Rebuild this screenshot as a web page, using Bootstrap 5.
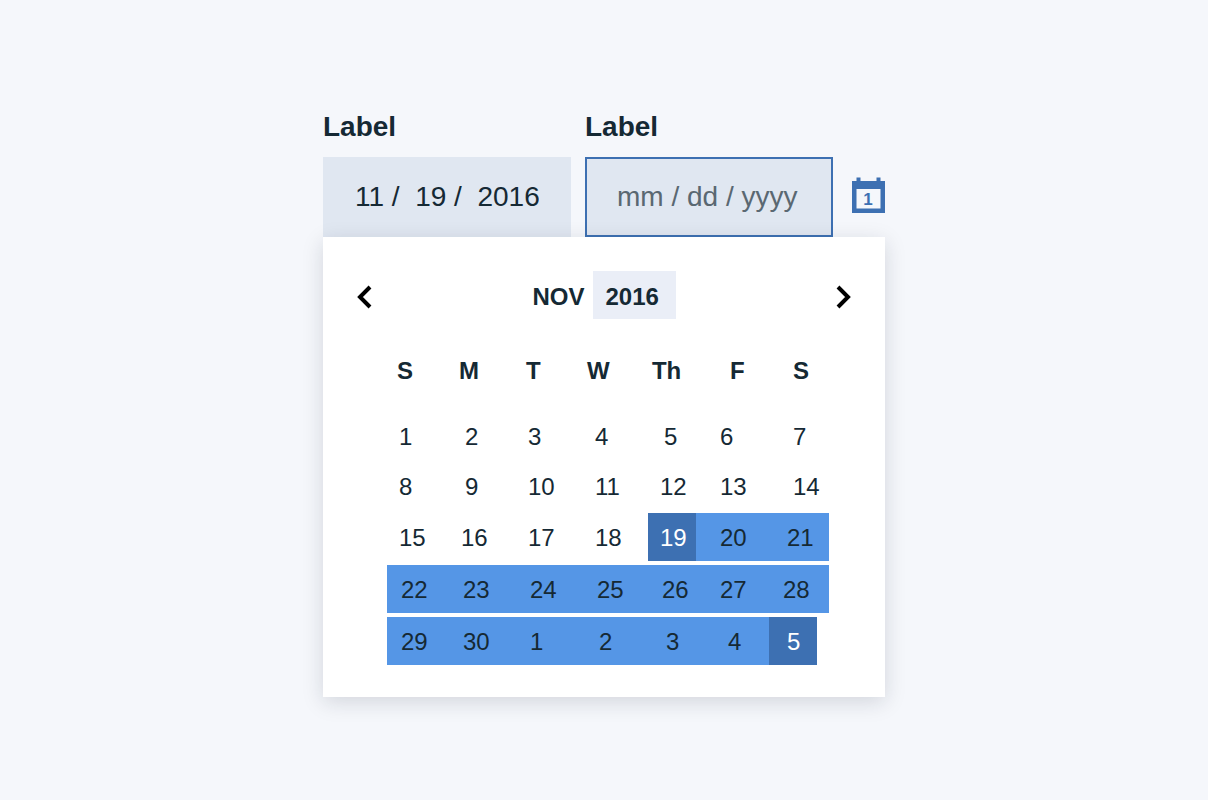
<!DOCTYPE html>
<html lang="en">
<head>
<meta charset="utf-8">
<meta name="viewport" content="width=device-width, initial-scale=1">
<title>Date range picker</title>
<link href="https://cdn.jsdelivr.net/npm/bootstrap@5.3.0/dist/css/bootstrap.min.css" rel="stylesheet">
<style>
  :root { --ink: #152934; --blue: #3d70b2; --sky: #5596e6; --field: #e0e7f1; }
  body { background: #f5f7fb; color: var(--ink); font-family: "Liberation Sans", Arial, sans-serif; }
  .picker { max-width: 562px; }
  .fields { gap: 14px; }
  .fields .form-label { font-size: 28px; line-height: 48px; font-weight: 700; margin-bottom: 6px; }
  .date-box { height: 80px; padding: 0 30px; border: 2px solid var(--field); border-radius: 0; background: var(--field); color: var(--ink); font-size: 28px; }
  .date-box:focus, .date-box.is-active { background: var(--field); border-color: var(--blue); box-shadow: none; }
  .date-box::placeholder { color: #5a6872; }
  .cal-toggle { width: 33px; margin: 0 0 24px 5px; }
  .panel { border-radius: 0; padding: 34px 0 28px; box-shadow: 0 5px 20px rgba(20, 25, 50, .15); }
  .month-bar { padding: 0 34px; margin-bottom: 22px; font-size: 24px; }
  .month-bar button, .cal-toggle { border: 0; background: none; padding: 0; color: inherit; line-height: 1; font-weight: 700; }
  .month-bar .arrow { color: #000; display: flex; padding-top: 4px; }
  .month-bar .year { background: #eaeef7; height: 48px; width: 83px; padding: 4px 0 0 13px; text-align: left; }
  .month-bar .month { padding-top: 4px; }
  .days-wrap { padding: 0 56px 0 64px; }
  .days { width: 100%; table-layout: fixed; border-collapse: separate; border-spacing: 0 4px; font-size: 24px; line-height: 46px; }
  .days th, .days td { padding: 0; }
  .days th { height: 64px; vertical-align: top; line-height: 52px; padding-left: 10px; }
  .days th.near { padding-left: 4px; }
  .days th.wide { padding-left: 24px; }
  .days th.far { padding-left: 34px; }
  .days button { display: block; width: 100%; height: 46px; border: 0; padding: 2px 0 0 12px; background: none; color: inherit; text-align: left; line-height: 44px; }
  .days .tall button { height: 48px; line-height: 46px; }
  .days .in-range button { padding-left: 14px; }
  .days td.solo button { padding-left: 16px; }
  .days td.wide button { padding-left: 24px; }
  .days td.end button { padding-left: 18px; }
  .days td.far button { padding-left: 32px; }
  .days .in-range { background: var(--sky); }
  .days .picked { background: var(--blue); color: #fff; }
</style>
</head>
<body class="min-vh-100 d-flex align-items-center justify-content-center">
<main class="picker w-100">
  <div class="fields d-flex align-items-end">
    <div class="flex-fill w-50">
      <label class="form-label d-block" for="from">Label</label>
      <input class="form-control date-box" id="from" type="text" value="11 /  19 /  2016">
    </div>
    <div class="flex-fill w-50">
      <label class="form-label d-block" for="to">Label</label>
      <input class="form-control date-box is-active" id="to" type="text" placeholder="mm / dd / yyyy">
    </div>
    <button class="cal-toggle flex-shrink-0" type="button" aria-label="Open calendar">
      <svg class="d-block" width="33" height="36" viewBox="0 0 33 36">
        <path fill="#3d70b2" fill-rule="evenodd" d="M4.500 .5h4V4h16V.5h4V4H33v32H0V4h4.500zM4.500 12v19.500h24V12z"/>
        <text x="16" y="28" text-anchor="middle" font-family="Liberation Sans, Arial, sans-serif" font-size="17" font-weight="700" fill="#3d70b2">1</text>
      </svg>
    </button>
  </div>

  <section class="card panel border-0 bg-white">
    <div class="month-bar d-flex align-items-center justify-content-between">
      <button class="arrow" type="button" aria-label="Previous month">
        <svg width="15" height="24" viewBox="0 0 15 24" fill="none" stroke="currentColor" stroke-width="4"><path d="M13 2 3 12l10 10"/></svg>
      </button>
      <div class="d-flex align-items-center">
        <button class="month me-2" type="button">NOV</button>
        <button class="year" type="button">2016</button>
      </div>
      <button class="arrow" type="button" aria-label="Next month">
        <svg width="15" height="24" viewBox="0 0 15 24" fill="none" stroke="currentColor" stroke-width="4"><path d="m2 2 10 10L2 22"/></svg>
      </button>
    </div>
    <div class="days-wrap">
      <table class="days">
        <colgroup>
          <col style="width:14.030%"><col style="width:15.150%"><col style="width:15.150%"><col style="width:14.710%"><col style="width:10.860%"><col style="width:16.520%"><col style="width:10.860%"><col style="width:2.720%">
        </colgroup>
        <thead>
          <tr><th scope="col">S</th><th scope="col">M</th><th scope="col">T</th><th class="near" scope="col">W</th><th class="near" scope="col">Th</th><th class="far" scope="col">F</th><th class="wide" scope="col" colspan="2">S</th></tr>
        </thead>
        <tbody>
          <tr>
            <td><button type="button">1</button></td>
            <td class="solo"><button type="button">2</button></td>
            <td><button type="button">3</button></td>
            <td><button type="button">4</button></td>
            <td class="solo"><button type="button">5</button></td>
            <td class="wide"><button type="button">6</button></td>
            <td class="wide" colspan="2"><button type="button">7</button></td>
          </tr>
          <tr>
            <td><button type="button">8</button></td>
            <td class="solo"><button type="button">9</button></td>
            <td><button type="button">10</button></td>
            <td><button type="button">11</button></td>
            <td><button type="button">12</button></td>
            <td class="wide"><button type="button">13</button></td>
            <td class="wide" colspan="2"><button type="button">14</button></td>
          </tr>
          <tr class="tall">
            <td><button type="button">15</button></td>
            <td><button type="button">16</button></td>
            <td><button type="button">17</button></td>
            <td><button type="button">18</button></td>
            <td class="picked"><button type="button">19</button></td>
            <td class="in-range wide"><button type="button">20</button></td>
            <td class="in-range end" colspan="2"><button type="button">21</button></td>
          </tr>
          <tr class="tall">
            <td class="in-range"><button type="button">22</button></td>
            <td class="in-range"><button type="button">23</button></td>
            <td class="in-range"><button type="button">24</button></td>
            <td class="in-range"><button type="button">25</button></td>
            <td class="in-range"><button type="button">26</button></td>
            <td class="in-range wide"><button type="button">27</button></td>
            <td class="in-range" colspan="2"><button type="button">28</button></td>
          </tr>
          <tr class="tall">
            <td class="in-range"><button type="button">29</button></td>
            <td class="in-range"><button type="button">30</button></td>
            <td class="in-range"><button type="button">1</button></td>
            <td class="in-range solo"><button type="button">2</button></td>
            <td class="in-range end"><button type="button">3</button></td>
            <td class="in-range far"><button type="button">4</button></td>
            <td class="picked end"><button type="button">5</button></td>
            <td></td>
          </tr>
        </tbody>
      </table>
    </div>
  </section>
</main>
<script src="https://cdn.jsdelivr.net/npm/bootstrap@5.3.0/dist/js/bootstrap.bundle.min.js"></script>
</body>
</html>
